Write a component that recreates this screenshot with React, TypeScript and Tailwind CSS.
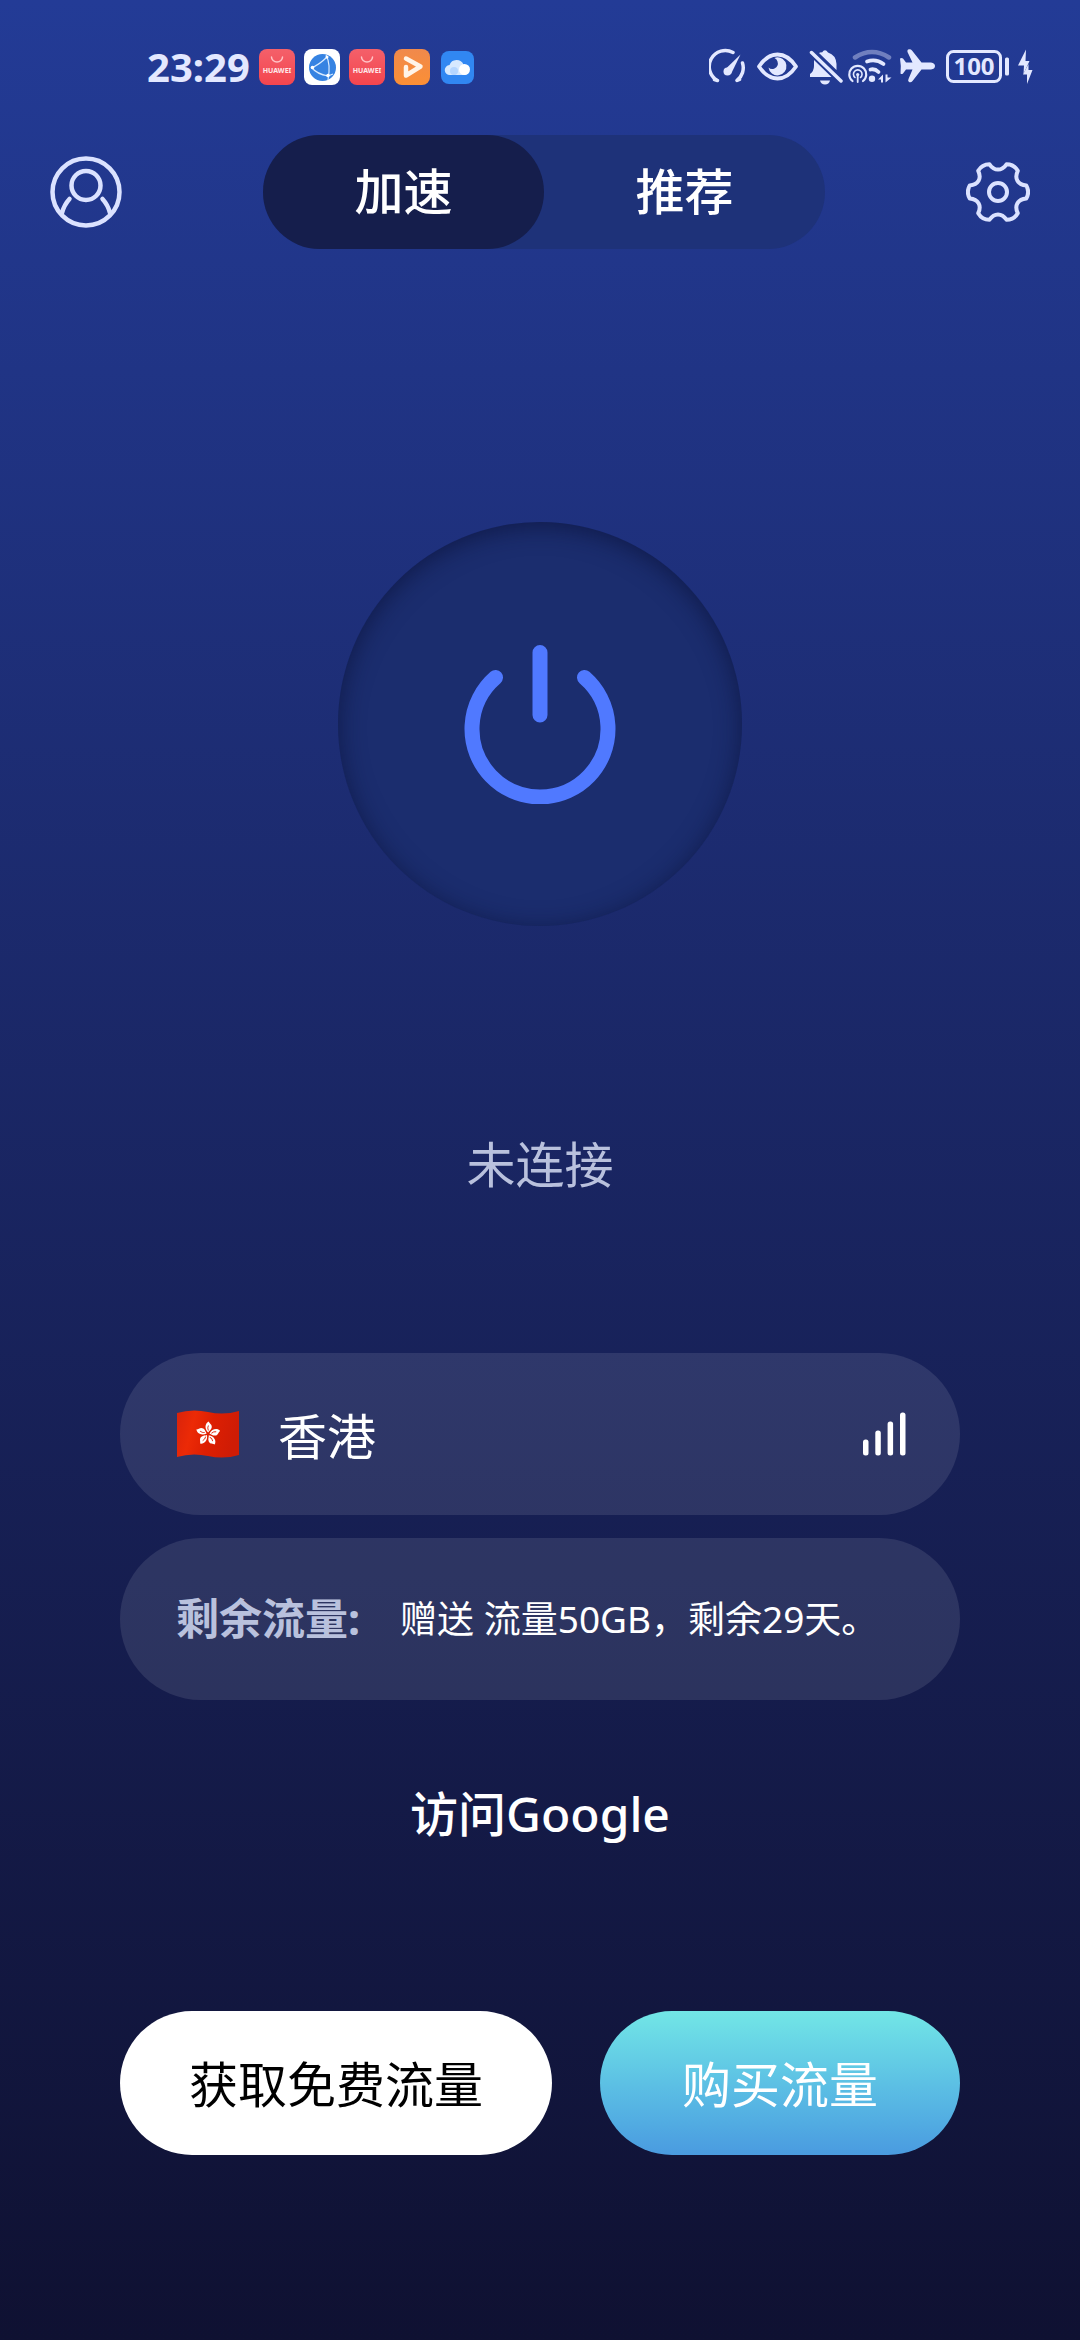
import { useState } from "react";

type Tab = "boost" | "recommend";

const tabs: { id: Tab; label: string }[] = [
  { id: "boost", label: "加速" },
  { id: "recommend", label: "推荐" },
];

function polar(radius: number, degrees: number) {
  const rad = (degrees * Math.PI) / 180;
  return `${(radius * Math.cos(rad)).toFixed(2)} ${(radius * Math.sin(rad)).toFixed(2)}`;
}

// six rounded teeth around the origin
const gearPath =
  [0, 60, 120, 180, 240, 300]
    .map((a, i) => `${i === 0 ? `M${polar(29, a - 13)}` : ""}Q${polar(32, a)} ${polar(29, a + 13)}C${polar(21, a + 20)} ${polar(21, a + 40)} ${polar(29, a + 47)}`)
    .join("") + "Z";

function HuaweiIcon() {
  return (
    <svg className="size-9" viewBox="0 0 36 36" aria-hidden="true">
      <defs>
        <linearGradient id="huawei" x1="0" y1="0" x2="0" y2="1">
          <stop offset="0" stopColor="#f4606a" />
          <stop offset="1" stopColor="#f4454e" />
        </linearGradient>
      </defs>
      <rect width="36" height="36" rx="8" fill="url(#huawei)" />
      <path d="M12.5 8a5.5 5 0 0 0 11 0" fill="none" stroke="#ffc3c6" strokeWidth="1.5" strokeLinecap="round" />
      <text x="18" y="24" textAnchor="middle" fontSize="7" fontWeight="700" fill="#ffe9ea">HUAWEI</text>
    </svg>
  );
}

function BrowserIcon() {
  return (
    <svg className="size-9" viewBox="0 0 36 36" aria-hidden="true">
      <rect width="36" height="36" rx="8" fill="#fff" />
      <circle cx="18.500" cy="18.500" r="13.500" fill="#3683e2" />
      <g fill="none" stroke="#d9ebff" strokeWidth="1.2">
        <path d="M7 19Q15 16 23 8M8 19Q13 25 24 27M22 6Q27 15 24 31M24 27L29 25" />
      </g>
      <g fill="#fff">
        <circle cx="23" cy="8" r="1.500" />
        <circle cx="8.500" cy="18.500" r="1.800" />
        <circle cx="24" cy="26.500" r="1.800" />
      </g>
    </svg>
  );
}

function VideoIcon() {
  return (
    <svg className="size-9" viewBox="0 0 36 36" aria-hidden="true">
      <defs>
        <linearGradient id="video" x1="0" y1="0" x2="0" y2="1">
          <stop offset="0" stopColor="#f0894c" />
          <stop offset="1" stopColor="#fb8f35" />
        </linearGradient>
      </defs>
      <rect width="36" height="36" rx="8" fill="url(#video)" />
      <path d="M12 9.500L26.500 17.500 12 26.500V18" fill="none" stroke="#fff4e8" strokeWidth="4.500" strokeLinecap="round" strokeLinejoin="round" />
    </svg>
  );
}

function CloudIcon() {
  return (
    <svg className="size-9" viewBox="0 0 36 36" aria-hidden="true">
      <rect x="2" y="2" width="33" height="33" rx="8" fill="#3187f2" />
      <path d="M11 26a5 5 0 0 1-.5-10A7.500 7.500 0 0 1 24.500 15.500 5.500 5.500 0 0 1 26 26Z" fill="#d7e9ff" />
      <circle cx="25.500" cy="20.500" r="5.500" fill="#fff" />
      <circle cx="15" cy="22" r="4" fill="#b5d6ff" />
    </svg>
  );
}

function StatusIcons() {
  return (
    <div className="flex gap-1 text-[#e3e8ff]" aria-hidden="true">
      <svg className="h-[38px] w-[42px]" viewBox="0 0 42 38" fill="none" stroke="currentColor" strokeWidth="3.5" strokeLinecap="round">
        <path d="M5.500 31.500L8.500 32.500A16 16 0 0 1 24 4.500M33.500 15A16 16 0 0 1 28 32.500L30.500 31.500" strokeLinejoin="round" />
        <path d="M15.500 22L31.500 6.500 22 26Z" fill="currentColor" stroke="none" />
        <circle cx="18.500" cy="23.500" r="4" fill="currentColor" stroke="none" />
      </svg>
      <svg className="h-[38px] w-[46px]" viewBox="0 0 46 38" fill="none">
        <path d="M4 18.500Q12 6.500 22.500 6.500T41 18.500Q33 30.500 22.500 30.500T4 18.500Z" stroke="currentColor" strokeWidth="3.8" strokeLinejoin="round" />
        <path d="M21 9.500A9 9 0 1 1 13.500 19.500Q16 22 19.500 20.500 24 18 22.500 13.500 22 11 19.500 10Z" fill="currentColor" />
      </svg>
      <svg className="h-[38px] w-[38px]" viewBox="0 0 38 38" fill="currentColor">
        <path d="M6.500 4.500L36 33" stroke="currentColor" strokeWidth="3.5" strokeLinecap="round" />
        <path d="M9 12L26.500 29H5V26Q9 23 9 18Z" />
        <path d="M14 5Q16 4 17 4.500 20 0 23 4.500 31 7 31.500 16V22Z" />
        <path d="M15 32.500H25Q24 36.500 20 36.500T15 32.500Z" />
      </svg>
      <svg className="h-[38px] w-[46px]" viewBox="0 0 46 38" fill="none" stroke="currentColor" strokeLinecap="round">
        <path d="M8 9.500Q25-1.500 42 9.500" strokeWidth="4.5" opacity="0.4" />
        <path d="M20 13.500Q29 10.500 36.500 16M23.500 21.500Q28 20.500 31.500 24" strokeWidth="3.8" />
        <circle cx="25" cy="30.800" r="3.200" fill="currentColor" stroke="none" />
        <path d="M5.500 33A8.500 8.500 0 1 1 16 33" strokeWidth="2.2" />
        <path d="M8 29.500A4.300 4.300 0 1 1 13.500 29.500" strokeWidth="1.600" />
        <circle cx="10.700" cy="26.500" r="1.600" fill="currentColor" stroke="none" />
        <path d="M10.700 27V34" strokeWidth="1.800" />
        <path d="M36 26.500V34.500H34V31.500H31ZM38.500 34.500V26.500H40.500V29.500H44.500Z" fill="currentColor" stroke="none" />
      </svg>
      <svg className="h-[38px] w-[42px]" viewBox="0 0 42 38" fill="currentColor">
        <path d="M11 1.500Q13.500.5 15 2.500L24.500 14.500H34Q38 15 38 18T34 21.500H24.500L15.500 33Q14 35 12 34 10.500 33 11.500 31L15.500 21.500H9L6 25.500Q4.500 26.500 3.500 25.500L3.800 18 3 10.500Q4.500 9.500 6 10.500L9 14.500H15.500L10.500 4Q10 2.500 11 1.500Z" />
      </svg>
      <svg className="h-[38px] w-[68px]" viewBox="0 0 68 38">
        <rect x="4.500" y="3.500" width="53" height="30" rx="6" fill="none" stroke="currentColor" strokeWidth="3" />
        <rect x="62" y="9.500" width="4" height="18" rx="1.500" fill="currentColor" />
        <text x="31" y="27" textAnchor="middle" fontSize="24" fontWeight="700" fill="currentColor">100</text>
      </svg>
      <svg className="h-[38px] w-[20px]" viewBox="0 0 20 38" fill="currentColor">
        <path d="M11 1.500L3 17.500H9L8.500 26 14.500 13H10.500Z" />
        <path d="M13.500 16V22H17.500L12 36V26.500H8Z" />
      </svg>
    </div>
  );
}

function HongKongFlag() {
  return (
    <svg className="h-12 w-16" viewBox="0 0 64 48" role="img" aria-label="香港">
      <defs>
        <linearGradient id="flag" x1="0" y1="0" x2="1" y2="0.2">
          <stop offset="0" stopColor="#d9230b" />
          <stop offset="0.3" stopColor="#ec2a06" />
          <stop offset="0.6" stopColor="#dd1f02" />
          <stop offset="1" stopColor="#cf1c05" />
        </linearGradient>
      </defs>
      <path d="M1 3Q16-1.500 32 2T63 1V45Q48 49.500 32 46T1 47Z" fill="url(#flag)" />
      <g transform="translate(32 24)">
        {[6, 78, 150, 222, 294].map((angle) => (
          <g key={angle} transform={`rotate(${angle})`}>
            <path d="M0-1.500C-4.500-5-4-10.500-.5-12.500 0-10.500 3.500-10 3-6.500 2.500-4 1-3.500 0-1.500Z" fill="#fff" />
            <path d="M0-3.500Q-1.500-6-.5-8.500" fill="none" stroke="#dd2a12" strokeWidth="0.900" />
          </g>
        ))}
      </g>
    </svg>
  );
}

export default function App() {
  const [tab, setTab] = useState<Tab>("boost");

  return (
    <div className="flex min-h-screen flex-col bg-linear-to-b from-[#233b96] to-[#0f1132] font-['Noto_Sans','Noto_Sans_CJK_SC',sans-serif] text-white">
      <div className="flex items-center justify-between pt-12 pr-[45px] pb-[49px] pl-[147px]">
        <div className="flex h-[38px] items-center gap-[9px]">
          <span className="text-[40px] leading-[38px] font-bold text-[#e3e8ff]">23:29</span>
          <HuaweiIcon />
          <BrowserIcon />
          <HuaweiIcon />
          <VideoIcon />
          <CloudIcon />
        </div>
        <StatusIcons />
      </div>

      <header className="flex items-center justify-between px-[50px]">
        <button aria-label="账户" className="text-[#dbe2ff]">
          <svg className="size-[72px]" viewBox="0 0 72 72" fill="none" stroke="currentColor" strokeWidth="4.5" strokeLinecap="round">
            <circle cx="36" cy="36" r="33.500" />
            <circle cx="36" cy="29.500" r="14.500" />
            <path d="M19.500 43Q14 49 12 57M52.500 43Q58 49 60 57" />
          </svg>
        </button>
        <nav className="flex rounded-full bg-[#1e3279]">
          {tabs.map((item) => (
            <button
              key={item.id}
              onClick={() => setTab(item.id)}
              className={`h-[114px] w-[281px] rounded-full text-[49px] font-medium ${tab === item.id ? "bg-[#151e4c]" : ""}`}
            >
              {item.label}
            </button>
          ))}
        </nav>
        <button aria-label="设置" className="text-[#dbe2ff]">
          <svg className="size-16" viewBox="-32 -32 64 64" fill="none" stroke="currentColor" strokeWidth="4" strokeLinejoin="round">
            <path d={gearPath} />
            <circle r="9" />
          </svg>
        </button>
      </header>

      <main className="flex flex-col items-center px-[120px] pb-[184px]">
        <button
          aria-label="连接"
          className="mt-[273px] flex size-[404px] items-center justify-center rounded-full bg-[#1b2d6e] text-[#5079ff] shadow-[inset_0_4px_24px_rgba(12,20,62,0.75)]"
        >
          <svg className="size-40" viewBox="0 0 160 160" fill="none" stroke="currentColor" strokeWidth="15" strokeLinecap="round">
            <path d="M80 8.500V71M35.500 33.500A68 68 0 1 0 124.500 33.500" />
          </svg>
        </button>
        <p className="mt-[208px] text-[49px] leading-[60px] text-[#b9c1dd]">未连接</p>

        <div className="mt-[159px] flex w-full flex-col gap-[23px]">
          <button className="flex h-[162px] items-center rounded-full bg-white/10 pr-[52px] pl-14 text-left">
            <HongKongFlag />
            <span className="ml-[38px] flex-1 pt-1 text-[49px] leading-[60px]">香港</span>
            <svg className="h-11 w-12" viewBox="0 0 48 44" fill="currentColor" aria-hidden="true">
              <rect x="3" y="27.500" width="5.500" height="16" rx="2.500" />
              <rect x="15.300" y="18.500" width="5.500" height="25" rx="2.500" />
              <rect x="27.600" y="9.500" width="5.500" height="34" rx="2.500" />
              <rect x="40" y="0.500" width="5.500" height="43" rx="2.500" />
            </svg>
          </button>
          <div className="flex h-[162px] items-center rounded-full bg-white/10 pr-10 pl-14 whitespace-nowrap">
            <span className="text-[43px] leading-[60px] font-bold text-[#b9c1dd]">剩余流量:</span>
            <span className="ml-10 text-[37px] leading-[60px]">赠送 流量50GB，剩余29天。</span>
          </div>
        </div>

        <a href="#google" className="mt-[84px] text-5xl leading-[60px] font-medium">访问Google</a>

        <div className="mt-[167px] flex w-full gap-12">
          <button className="h-36 flex-6 rounded-full bg-white pt-1 text-[49px] text-black">获取免费流量</button>
          <button className="h-36 flex-5 rounded-full bg-linear-to-b from-[#72e6e6] to-[#4a9be0] pt-1 text-[49px]">购买流量</button>
        </div>
      </main>
    </div>
  );
}
